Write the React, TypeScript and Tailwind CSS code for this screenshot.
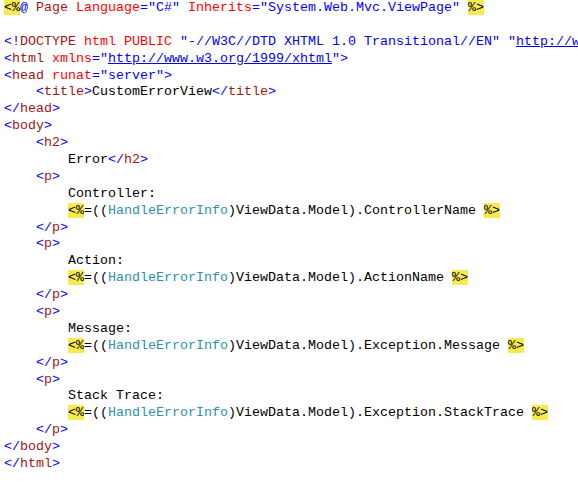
type Tok = [string, string?];

const B = "text-[#0000ff]";
const M = "text-[#a31515]";
const R = "text-[#ff0000]";
const T = "text-[#2b91af]";
const H = "bg-[#f7ea4e] text-black";
const U = "text-[#0000ff] underline";

function tag(indent: string, name: string, close = false): Tok[] {
    return [[indent], [close ? "</" : "<", B], [name, M], [">", B]];
}

function expr(member: string): Tok[] {
    return [
        ["        "],
        ["<%", H],
        ["=(("],
        ["HandleErrorInfo", T],
        [")ViewData.Model)." + member + " "],
        ["%>", H],
    ];
}

const lines: Tok[][] = [
    [
        ["<%", H],
        ["@", B],
        [" Page", M],
        [" Language", R],
        ['="C#"', B],
        [" Inherits", R],
        ['="System.Web.Mvc.ViewPage"', B],
        [" "],
        ["%>", H],
    ],
    [],
    [
        ["<!", B],
        ["DOCTYPE", M],
        [" html PUBLIC", R],
        [' "-//W3C//DTD XHTML 1.0 Transitional//EN" "', B],
        ["http://www.w3.org/TR/xhtml1/DTD/xhtml1-transitional.dtd", U],
        ['">', B],
    ],
    [
        ["<", B],
        ["html", M],
        [" xmlns", R],
        ['="', B],
        ["http://www.w3.org/1999/xhtml", U],
        ['">', B],
    ],
    [
        ["<", B],
        ["head", M],
        [" runat", R],
        ['="server"', B],
        [">", B],
    ],
    [
        ["    "],
        ["<", B],
        ["title", M],
        [">", B],
        ["CustomErrorView"],
        ["</", B],
        ["title", M],
        [">", B],
    ],
    tag("", "head", true),
    tag("", "body"),
    tag("    ", "h2"),
    [["        Error"], ["</", B], ["h2", M], [">", B]],
    tag("    ", "p"),
    [["        Controller:"]],
    expr("ControllerName"),
    tag("    ", "p", true),
    tag("    ", "p"),
    [["        Action:"]],
    expr("ActionName"),
    tag("    ", "p", true),
    tag("    ", "p"),
    [["        Message:"]],
    expr("Exception.Message"),
    tag("    ", "p", true),
    tag("    ", "p"),
    [["        Stack Trace:"]],
    expr("Exception.StackTrace"),
    tag("    ", "p", true),
    tag("", "body", true),
    tag("", "html", true),
];

export default function App() {
    return (
        <div className="w-[578px] h-[482px] overflow-hidden bg-white pl-1 font-['Liberation_Mono',monospace] text-[13.33px] text-black">
            {lines.map((line, i) => (
                <div key={i} className="h-[16.9px] leading-[16.9px] whitespace-pre">
                    {line.length === 0
                        ? " "
                        : line.map(([text, cls], j) => (
                              <span key={j} className={cls}>
                                  {text}
                              </span>
                          ))}
                </div>
            ))}
        </div>
    );
}
